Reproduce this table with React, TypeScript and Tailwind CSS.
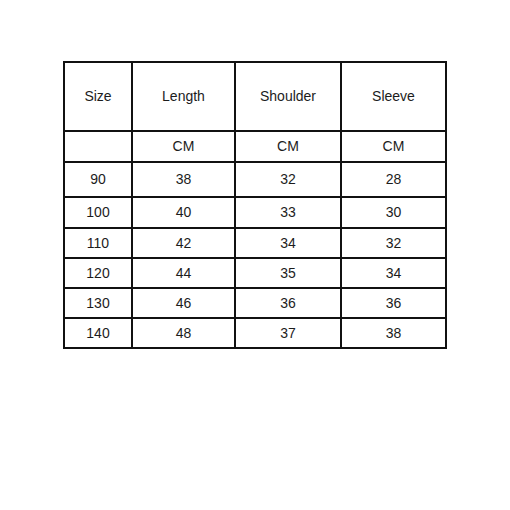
import React from "react";

const heads = ["Size", "Length", "Shoulder", "Sleeve"];
const rows = [
  ["90", "38", "32", "28"],
  ["100", "40", "33", "30"],
  ["110", "42", "34", "32"],
  ["120", "44", "35", "34"],
  ["130", "46", "36", "36"],
  ["140", "48", "37", "38"],
];

export default function App() {
  return (
    <div className="w-[510px] h-[510px] bg-white pt-[61px] pl-[63px]" style={{ fontFamily: '"Liberation Sans", Arial, sans-serif' }}>
      <div className="grid w-fit bg-[#111] p-[2px] gap-[2px] grid-cols-[66px_101px_104px_103px] grid-rows-[67px_29px_33px_29px_28px_28px_28px_28px] text-[14px] text-[#1c1c1c]">
        {heads.map((h) => (
          <div key={h} className="bg-white flex items-center justify-center">{h}</div>
        ))}
        <div className="bg-white" />
        {["CM", "CM", "CM"].map((c, i) => (
          <div key={i} className="bg-white flex items-center justify-center">{c}</div>
        ))}
        {rows.map((r, i) =>
          r.map((c, j) => (
            <div key={i + "-" + j} className="bg-white flex items-center justify-center">{c}</div>
          ))
        )}
      </div>
    </div>
  );
}
